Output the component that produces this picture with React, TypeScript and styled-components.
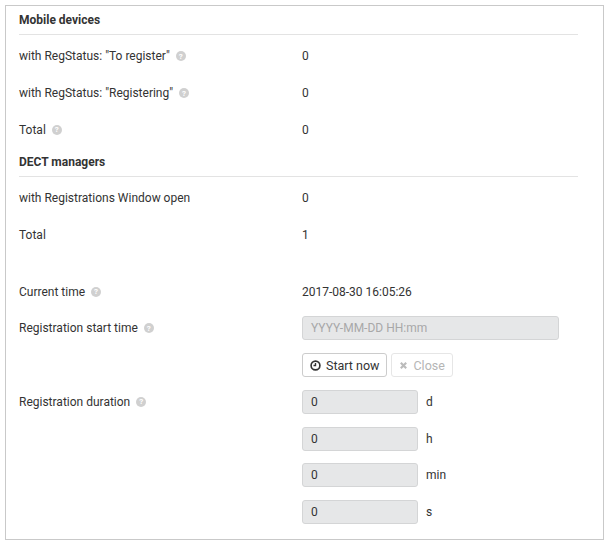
import React from "react";
import styled, { createGlobalStyle } from "styled-components";

const Global = createGlobalStyle`
  body { margin: 0; background: #fff; font-family: Roboto, "Liberation Sans", sans-serif; font-size: 12px; color: #333; }
`;
const Panel = styled.div`
  margin: 5px 0 0 5px; width: 599px; height: 535px; border: 1px solid #c9c9c9;
  padding: 0 25px 0 13px; box-sizing: border-box;
`;
const Header = styled.div`
  height: 28px; display: flex; align-items: center; font-weight: 700;
  border-bottom: 1px solid #e3e3e3;
`;
const Section = styled.div<{ $pt?: number }>` padding-top: ${p => p.$pt ?? 3}px; `;
const Row = styled.div`
  display: grid; grid-template-columns: 283px 1fr; height: 36.7px; align-items: center;
`;
const Label = styled.div` display: flex; align-items: center; gap: 6px; `;
const Help = styled.span`
  width: 10px; height: 10px; border-radius: 50%; background: #d0d0d0; color: #fff;
  font-size: 8px; font-weight: 700; display: inline-flex; align-items: center; justify-content: center;
`;
const Value = styled.div` display: flex; align-items: center; gap: 8px; `;
const Input = styled.div<{ $w: number; $ph?: boolean }>`
  width: ${p => p.$w}px; height: 24px; box-sizing: border-box; background: #e6e7e8;
  border: 1px solid #d4d5d6; border-radius: 3px; display: flex; align-items: center; padding: 0 8px;
  color: ${p => (p.$ph ? "#a8a8a8" : "#333")};
`;
const Btn = styled.button<{ $dis?: boolean }>`
  height: 24px; border: 1px solid ${p => (p.$dis ? "#e6e6e6" : "#ccc")}; background: #fff; border-radius: 3px;
  padding: 0 7px; font: inherit; font-size: 12.5px; color: ${p => (p.$dis ? "#b5b5b5" : "#333")};
  display: inline-flex; align-items: center; gap: 5px;
`;
const Buttons = styled.div` display: flex; gap: 4px; `;

const H = () => <Help>?</Help>;

export default function App() {
  return (
    <>
      <Global />
      <Panel>
        <Header>Mobile devices</Header>
        <Section>
          <Row><Label>with RegStatus: "To register" <H /></Label><Value>0</Value></Row>
          <Row><Label>with RegStatus: "Registering" <H /></Label><Value>0</Value></Row>
          <Row><Label>Total <H /></Label><Value>0</Value></Row>
        </Section>
        <Header>DECT managers</Header>
        <Section>
          <Row><Label>with Registrations Window open</Label><Value>0</Value></Row>
          <Row><Label>Total</Label><Value>1</Value></Row>
        </Section>
        <Section $pt={20}>
          <Row><Label>Current time <H /></Label><Value>2017-08-30 16:05:26</Value></Row>
          <Row><Label>Registration start time <H /></Label><Value><Input $w={257} $ph>YYYY-MM-DD HH:mm</Input></Value></Row>
          <Row><Label /><Buttons>
            <Btn>
              <svg width="11" height="11" viewBox="0 0 12 12"><circle cx="6" cy="6" r="4.8" fill="none" stroke="#333" strokeWidth="1.8" /><path d="M6 3.3V6H3.8" fill="none" stroke="#333" strokeWidth="1.5" /></svg>
              Start now
            </Btn>
            <Btn $dis>
              <svg width="9" height="9" viewBox="0 0 10 10"><path d="M2 2L8 8M8 2L2 8" stroke="#bbb" strokeWidth="2.4" /></svg>
              Close
            </Btn>
          </Buttons></Row>
          <Row><Label>Registration duration <H /></Label><Value><Input $w={116}>0</Input>d</Value></Row>
          <Row><Label /><Value><Input $w={116}>0</Input>h</Value></Row>
          <Row><Label /><Value><Input $w={116}>0</Input>min</Value></Row>
          <Row><Label /><Value><Input $w={116}>0</Input>s</Value></Row>
        </Section>
      </Panel>
    </>
  );
}
